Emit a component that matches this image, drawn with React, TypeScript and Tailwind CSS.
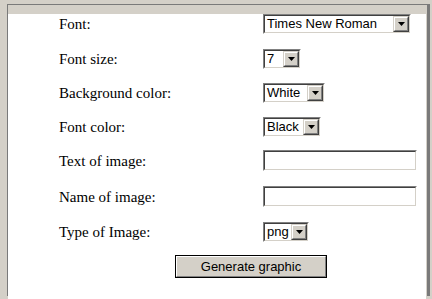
import React from "react";

const serif = { fontFamily: '"Liberation Serif", "Times New Roman", serif' };
const sans = { fontFamily: '"Liberation Sans", Arial, sans-serif' };

function Arrow() {
  return (
    <div className="h-full w-[16px] shrink-0 border border-t-[#d4d0c8] border-l-[#d4d0c8] border-b-[#404040] border-r-[#404040]">
      <div className="flex h-full w-full items-center justify-center border border-t-white border-l-white border-b-[#808080] border-r-[#808080] bg-[#d4d0c8]">
        <svg width="7" height="4" viewBox="0 0 7 4">
          <path d="M0 0h7L3.5 4z" fill="#000" />
        </svg>
      </div>
    </div>
  );
}

function Select({ value, width }: { value: string; width: number }) {
  return (
    <div
      className="h-[20px] border border-t-[#808080] border-l-[#808080] border-b-white border-r-white"
      style={{ width }}
    >
      <div className="flex h-full w-full border border-t-[#404040] border-l-[#404040] border-b-[#d4d0c8] border-r-[#d4d0c8] bg-white">
        <div
          className="flex-1 pl-[2px] text-[13px] leading-[16px] text-black"
          style={sans}
        >
          {value}
        </div>
        <Arrow />
      </div>
    </div>
  );
}

function TextBox() {
  return (
    <div className="h-[21px] w-[154px] border border-t-[#808080] border-l-[#808080] border-b-white border-r-white">
      <div className="h-full w-full border border-t-[#404040] border-l-[#404040] border-b-[#d4d0c8] border-r-[#d4d0c8] bg-white" />
    </div>
  );
}

const rows = [
  { label: "Font:", mt: "mt-[9px]", control: <Select value="Times New Roman" width={148} /> },
  { label: "Font size:", mt: "mt-[15px]", control: <Select value="7" width={38} /> },
  { label: "Background color:", mt: "mt-[14px]", control: <Select value="White" width={62} /> },
  { label: "Font color:", mt: "mt-[14px]", control: <Select value="Black" width={58} /> },
  { label: "Text of image:", mt: "mt-[13px]", control: <TextBox /> },
  { label: "Name of image:", mt: "mt-[15px]", control: <TextBox /> },
  { label: "Type of Image:", mt: "mt-[15px]", control: <Select value="png" width={46} /> },
];

export default function App() {
  return (
    <div className="h-[299px] w-[432px] overflow-hidden bg-[#d4d0c8] pl-[7px] pt-[4px]">
      <div className="h-[292px] w-[423px] border-l border-t border-r-[3px] border-b-[4px] border-[#7a7a7a]">
        <div className="h-full w-full border-r border-b border-[#d4d0c8] bg-white pl-[51px]">
          {rows.map((row) => (
            <div key={row.label} className={`flex items-center ${row.mt}`}>
              <div
                className="w-[204px] shrink-0 text-[15px] leading-[18px] text-black"
                style={serif}
              >
                {row.label}
              </div>
              {row.control}
            </div>
          ))}
          <div className="mt-[13px] ml-[116px] h-[23px] w-[152px] border border-black">
            <div
              className="flex h-full w-full items-center justify-center border border-t-white border-l-white border-b-[#808080] border-r-[#808080] bg-[#d4d0c8] text-[13px] text-black"
              style={sans}
            >
              Generate graphic
            </div>
          </div>
        </div>
      </div>
    </div>
  );
}
